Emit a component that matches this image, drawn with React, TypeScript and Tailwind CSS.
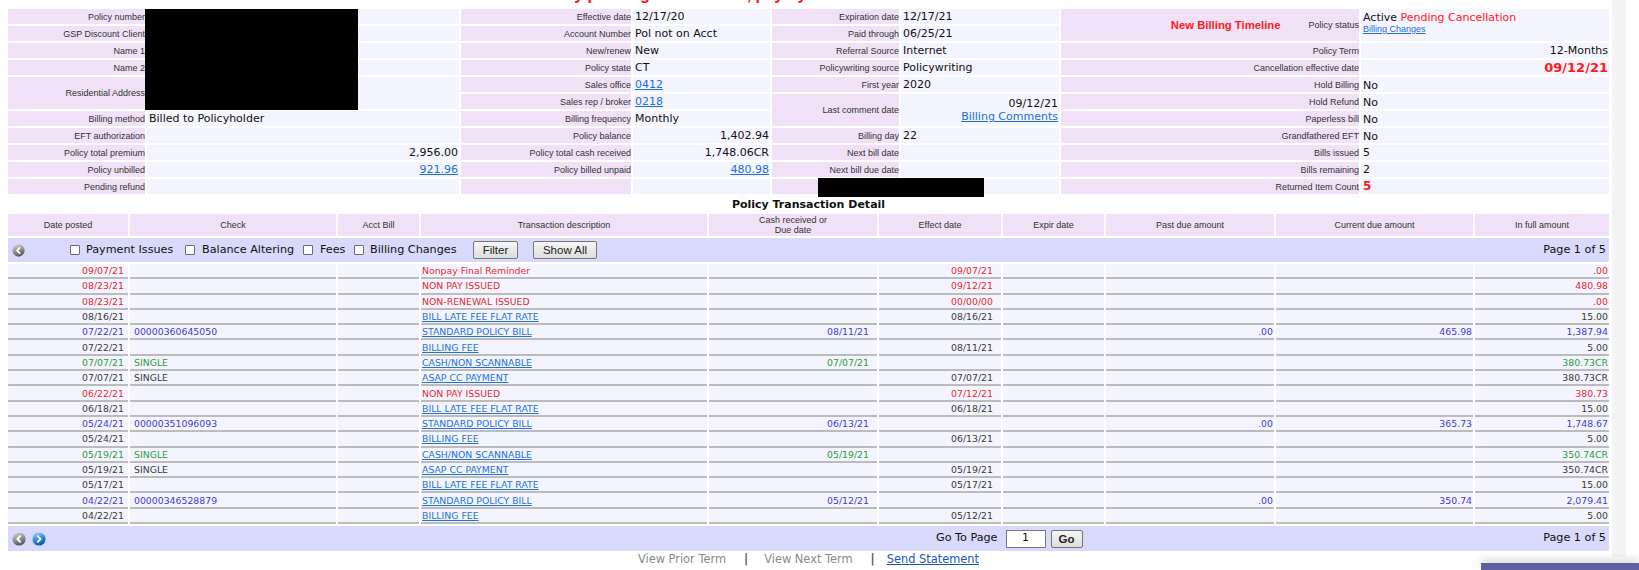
import React from 'react';

type Tone = 'red' | 'blue' | 'green' | 'gray';

const toneClass: Record<Tone, string> = {
  red: 'text-[#e22a2f]',
  blue: 'text-[#3c3cd2]',
  green: 'text-[#2e9b3c]',
  gray: 'text-[#3a3a3a]',
};

interface Txn {
  tone: Tone;
  date: string;
  check?: string;
  desc: string;
  link: boolean;
  cash?: string;
  effect?: string;
  past?: string;
  cur?: string;
  full: string;
}

const txns: Txn[] = [
  { tone: 'red', date: '09/07/21', desc: 'Nonpay Final Reminder', link: false, effect: '09/07/21', full: '.00' },
  { tone: 'red', date: '08/23/21', desc: 'NON PAY ISSUED', link: false, effect: '09/12/21', full: '480.98' },
  { tone: 'red', date: '08/23/21', desc: 'NON-RENEWAL ISSUED', link: false, effect: '00/00/00', full: '.00' },
  { tone: 'gray', date: '08/16/21', desc: 'BILL LATE FEE FLAT RATE', link: true, effect: '08/16/21', full: '15.00' },
  { tone: 'blue', date: '07/22/21', check: '00000360645050', desc: 'STANDARD POLICY BILL', link: true, cash: '08/11/21', past: '.00', cur: '465.98', full: '1,387.94' },
  { tone: 'gray', date: '07/22/21', desc: 'BILLING FEE', link: true, effect: '08/11/21', full: '5.00' },
  { tone: 'green', date: '07/07/21', check: 'SINGLE', desc: 'CASH/NON SCANNABLE', link: true, cash: '07/07/21', full: '380.73CR' },
  { tone: 'gray', date: '07/07/21', check: 'SINGLE', desc: 'ASAP CC PAYMENT', link: true, effect: '07/07/21', full: '380.73CR' },
  { tone: 'red', date: '06/22/21', desc: 'NON PAY ISSUED', link: false, effect: '07/12/21', full: '380.73' },
  { tone: 'gray', date: '06/18/21', desc: 'BILL LATE FEE FLAT RATE', link: true, effect: '06/18/21', full: '15.00' },
  { tone: 'blue', date: '05/24/21', check: '00000351096093', desc: 'STANDARD POLICY BILL', link: true, cash: '06/13/21', past: '.00', cur: '365.73', full: '1,748.67' },
  { tone: 'gray', date: '05/24/21', desc: 'BILLING FEE', link: true, effect: '06/13/21', full: '5.00' },
  { tone: 'green', date: '05/19/21', check: 'SINGLE', desc: 'CASH/NON SCANNABLE', link: true, cash: '05/19/21', full: '350.74CR' },
  { tone: 'gray', date: '05/19/21', check: 'SINGLE', desc: 'ASAP CC PAYMENT', link: true, effect: '05/19/21', full: '350.74CR' },
  { tone: 'gray', date: '05/17/21', desc: 'BILL LATE FEE FLAT RATE', link: true, effect: '05/17/21', full: '15.00' },
  { tone: 'blue', date: '04/22/21', check: '00000346528879', desc: 'STANDARD POLICY BILL', link: true, cash: '05/12/21', past: '.00', cur: '350.74', full: '2,079.41' },
  { tone: 'gray', date: '04/22/21', desc: 'BILLING FEE', link: true, effect: '05/12/21', full: '5.00' },
];

const LBL =
  "bg-[#f0e1f7] flex items-center justify-end text-right text-[9px] leading-[10px] text-[#333] [font-family:'Liberation_Sans',Arial,sans-serif] whitespace-nowrap overflow-hidden";
const VAL = 'bg-[#f4f4fe] flex items-center text-[11px] leading-[13px] text-[#111] whitespace-nowrap overflow-hidden';
const LINK = 'text-[#1d6fd4] underline';

const NavIcon = ({ dir, tone, size }: { dir: 'left' | 'right'; tone: 'gray' | 'blue'; size: number }) => {
  const id = `nav-${tone}-${dir}-${size}`;
  return (
    <svg width={size} height={size} viewBox="0 0 14 14" className="shrink-0">
      <defs>
        <linearGradient id={id} x1="0.3" y1="0" x2="0.7" y2="1">
          <stop offset="0" stopColor={tone === 'gray' ? '#cfcfcf' : '#8ccaf7'} />
          <stop offset="0.55" stopColor={tone === 'gray' ? '#8a8a8a' : '#2a84d2'} />
          <stop offset="1" stopColor={tone === 'gray' ? '#505050' : '#0a4f98'} />
        </linearGradient>
      </defs>
      <circle cx="7" cy="7" r="6.6" fill={`url(#${id})`} />
      <path
        d={dir === 'left' ? 'M8.2 4.2 L5.4 7 L8.2 9.8' : 'M5.8 4.2 L8.6 7 L5.8 9.8'}
        stroke="#ffffff"
        strokeWidth="1.9"
        fill="none"
        strokeLinecap="round"
        strokeLinejoin="round"
      />
    </svg>
  );
};

const CheckBox = ({ className = '' }: { className?: string }) => (
  <span className={`inline-block w-[10px] h-[10px] border border-[#6b6b6b] rounded-[1px] bg-white shrink-0 ${className}`} />
);

const TopTable = () => (
  <div className="grid grid-cols-[137px_312px_170px_137px_127px_158px_298px_248px] grid-rows-[repeat(11,15px)] gap-[2px]">
    {/* row 1 */}
    <div className={LBL}>Policy number</div>
    <div className={VAL} />
    <div className={LBL}>Effective date</div>
    <div className={`${VAL} pl-[2px]`}>12/17/20</div>
    <div className={LBL}>Expiration date</div>
    <div className={`${VAL} pl-[2px]`}>12/17/21</div>
    <div className={`${LBL} row-span-2`}>
      <span className="mr-[28px] text-[11.3px] font-bold text-[#ff1a1a]">New Billing Timeline</span>
      <span>Policy status</span>
    </div>
    <div className="row-span-2 bg-[#f4f4fe] flex flex-col items-start justify-start pt-[2px] pl-[2px] whitespace-nowrap">
      <div className="text-[11px] leading-[13px] text-[#111]">
        Active <span className="text-[#ff1a1a]">Pending Cancellation</span>
      </div>
      <div className={`text-[9px] leading-[10px] [font-family:'Liberation_Sans',Arial,sans-serif] ${LINK}`}>Billing Changes</div>
    </div>

    {/* row 2 */}
    <div className={LBL}>GSP Discount Client</div>
    <div className={VAL} />
    <div className={LBL}>Account Number</div>
    <div className={`${VAL} pl-[2px]`}>Pol not on Acct</div>
    <div className={LBL}>Paid through</div>
    <div className={`${VAL} pl-[2px]`}>06/25/21</div>

    {/* row 3 */}
    <div className={LBL}>Name 1</div>
    <div className={VAL} />
    <div className={LBL}>New/renew</div>
    <div className={`${VAL} pl-[2px]`}>New</div>
    <div className={LBL}>Referral Source</div>
    <div className={`${VAL} pl-[2px]`}>Internet</div>
    <div className={LBL}>Policy Term</div>
    <div className={`${VAL} justify-end pr-[1px]`}>12-Months</div>

    {/* row 4 */}
    <div className={LBL}>Name 2</div>
    <div className={VAL} />
    <div className={LBL}>Policy state</div>
    <div className={`${VAL} pl-[2px]`}>CT</div>
    <div className={LBL}>Policywriting source</div>
    <div className={`${VAL} pl-[2px]`}>Policywriting</div>
    <div className={LBL}>Cancellation effective date</div>
    <div className={`${VAL} justify-end pr-[1px]`}>
      <span className="text-[13px] font-bold text-[#ff1a1a]">09/12/21</span>
    </div>

    {/* row 5 */}
    <div className={`${LBL} row-span-2`}>Residential Address</div>
    <div className={`${VAL} row-span-2`} />
    <div className={LBL}>Sales office</div>
    <div className={`${VAL} pl-[2px]`}>
      <span className={LINK}>0412</span>
    </div>
    <div className={LBL}>First year</div>
    <div className={`${VAL} pl-[2px]`}>2020</div>
    <div className={LBL}>Hold Billing</div>
    <div className={`${VAL} pl-[2px] pt-[2px]`}>No</div>

    {/* row 6 */}
    <div className={LBL}>Sales rep / broker</div>
    <div className={`${VAL} pl-[2px]`}>
      <span className={LINK}>0218</span>
    </div>
    <div className={`${LBL} row-span-2`}>Last comment date</div>
    <div className="row-span-2 bg-[#f4f4fe] flex flex-col items-end justify-center pr-[1px] text-[11px] leading-[13px] text-[#111] whitespace-nowrap">
      <div>09/12/21</div>
      <div className={LINK}>Billing Comments</div>
    </div>
    <div className={LBL}>Hold Refund</div>
    <div className={`${VAL} pl-[2px] pt-[2px]`}>No</div>

    {/* row 7 */}
    <div className={LBL}>Billing method</div>
    <div className={`${VAL} pl-[2px]`}>Billed to Policyholder</div>
    <div className={LBL}>Billing frequency</div>
    <div className={`${VAL} pl-[2px]`}>Monthly</div>
    <div className={LBL}>Paperless bill</div>
    <div className={`${VAL} pl-[2px] pt-[2px]`}>No</div>

    {/* row 8 */}
    <div className={LBL}>EFT authorization</div>
    <div className={VAL} />
    <div className={LBL}>Policy balance</div>
    <div className={`${VAL} justify-end pr-[1px]`}>1,402.94</div>
    <div className={LBL}>Billing day</div>
    <div className={`${VAL} pl-[2px]`}>22</div>
    <div className={LBL}>Grandfathered EFT</div>
    <div className={`${VAL} pl-[2px] pt-[2px]`}>No</div>

    {/* row 9 */}
    <div className={LBL}>Policy total premium</div>
    <div className={`${VAL} justify-end pr-[1px]`}>2,956.00</div>
    <div className={LBL}>Policy total cash received</div>
    <div className={`${VAL} justify-end pr-[1px]`}>1,748.06CR</div>
    <div className={LBL}>Next bill date</div>
    <div className={VAL} />
    <div className={LBL}>Bills issued</div>
    <div className={`${VAL} pl-[2px]`}>5</div>

    {/* row 10 */}
    <div className={LBL}>Policy unbilled</div>
    <div className={`${VAL} justify-end pr-[1px]`}>
      <span className={LINK}>921.96</span>
    </div>
    <div className={LBL}>Policy billed unpaid</div>
    <div className={`${VAL} justify-end pr-[1px]`}>
      <span className={LINK}>480.98</span>
    </div>
    <div className={LBL}>Next bill due date</div>
    <div className={VAL} />
    <div className={LBL}>Bills remaining</div>
    <div className={`${VAL} pl-[2px]`}>2</div>

    {/* row 11 */}
    <div className={LBL}>Pending refund</div>
    <div className={VAL} />
    <div className={LBL} />
    <div className={VAL} />
    <div className={LBL} />
    <div className={VAL} />
    <div className={LBL}>Returned Item Count</div>
    <div className={`${VAL} pl-[2px]`}>
      <span className="text-[12px] font-bold text-[#ff1a1a]">5</span>
    </div>
  </div>
);

const COLS = 'grid grid-cols-[120px_206px_81px_286px_168px_122px_101px_168px_197px_134px] gap-x-[2px]';
const HDR =
  "bg-[#f0e1f7] flex items-center justify-center text-center text-[9px] leading-[10px] text-[#333] [font-family:'Liberation_Sans',Arial,sans-serif]";
const CELL =
  'h-[15.3px] bg-[#f4f4fe] border-b-2 border-[#bcbcbc] flex items-center text-[9.33px] leading-[11px] whitespace-nowrap overflow-hidden';
const BTN =
  "h-[18px] border border-[#767676] rounded-[2px] bg-gradient-to-b from-[#f6f6f6] to-[#dddddd] text-[11.5px] leading-[14px] text-[#222] [font-family:'Liberation_Sans',Arial,sans-serif] shrink-0";

const TxnTable = () => (
  <div>
    <div className={`${COLS} h-[22px]`}>
      <div className={HDR}>Date posted</div>
      <div className={HDR}>Check</div>
      <div className={HDR}>Acct Bill</div>
      <div className={HDR}>Transaction description</div>
      <div className={HDR}>
        Cash received or
        <br />
        Due date
      </div>
      <div className={HDR}>Effect date</div>
      <div className={HDR}>Expir date</div>
      <div className={HDR}>Past due amount</div>
      <div className={HDR}>Current due amount</div>
      <div className={HDR}>In full amount</div>
    </div>

    {/* filter row */}
    <div className="mt-[2px] h-[24px] bg-[#d9d9fb] flex items-center pl-[4px] pr-[3px] text-[11.2px] text-[#111] whitespace-nowrap">
      <NavIcon dir="left" tone="gray" size={13} />
      <CheckBox className="ml-[45px]" />
      <span className="ml-[6px] w-[91px] shrink-0">Payment Issues</span>
      <CheckBox className="ml-[8px]" />
      <span className="ml-[7px] w-[92px] shrink-0">Balance Altering</span>
      <CheckBox className="ml-[9px]" />
      <span className="ml-[7px] w-[25px] shrink-0">Fees</span>
      <CheckBox className="ml-[9px]" />
      <span className="ml-[6px] w-[87px] shrink-0">Billing Changes</span>
      <button className={`${BTN} ml-[16px] w-[45px]`}>Filter</button>
      <button className={`${BTN} ml-[15px] w-[64px]`}>Show All</button>
      <span className="ml-auto">Page 1 of 5</span>
    </div>

    {/* data rows */}
    <div className={`${COLS} mt-[2px]`}>
      {txns.map((t, i) => {
        const tc = toneClass[t.tone];
        return (
          <React.Fragment key={i}>
            <div className={`${CELL} ${tc} justify-end pr-[4px]`}>{t.date}</div>
            <div className={`${CELL} ${tc} justify-start pl-[4px]`}>{t.check ?? ''}</div>
            <div className={CELL} />
            <div className={`${CELL} justify-start pl-[1px]`}>
              <span className={t.link ? 'text-[#2273d6] underline' : tc}>{t.desc}</span>
            </div>
            <div className={`${CELL} ${tc} justify-end pr-[8px]`}>{t.cash ?? ''}</div>
            <div className={`${CELL} ${tc} justify-end pr-[8px]`}>{t.effect ?? ''}</div>
            <div className={CELL} />
            <div className={`${CELL} ${tc} justify-end pr-[1px]`}>{t.past ?? ''}</div>
            <div className={`${CELL} ${tc} justify-end pr-[1px]`}>{t.cur ?? ''}</div>
            <div className={`${CELL} ${tc} justify-end pr-[1px]`}>{t.full}</div>
          </React.Fragment>
        );
      })}
    </div>

    {/* footer row */}
    <div className="mt-[2px] h-[25px] bg-[#d9d9fb] flex items-center pl-[4px] pr-[3px] text-[#111] whitespace-nowrap">
      <NavIcon dir="left" tone="gray" size={14} />
      <span className="ml-[6px] flex">
        <NavIcon dir="right" tone="blue" size={14} />
      </span>
      <span className="ml-[890px] text-[11.2px]">Go To Page</span>
      <div className="ml-[8px] w-[40px] h-[18px] bg-white border border-[#7a7a7a] flex items-center justify-center text-[11px] shrink-0">
        1
      </div>
      <button className={`${BTN} ml-[5px] w-[32px] h-[17px] text-[10px] font-bold`}>Go</button>
      <span className="ml-auto text-[11.2px]">Page 1 of 5</span>
    </div>

    {/* bottom links */}
    <div className="h-[18px] flex items-center justify-center text-[11.4px] whitespace-nowrap">
      <span className="text-[#8a8a8a]">View Prior Term</span>
      <span className="ml-[18px] mr-[16px] text-[#555] font-bold">|</span>
      <span className="text-[#8a8a8a]">View Next Term</span>
      <span className="ml-[18px] mr-[12px] text-[#555] font-bold">|</span>
      <span className="text-[#1a55c8] underline">Send Statement</span>
    </div>
  </div>
);

export default function App() {
  return (
    <div className="relative w-[1639px] h-[570px] overflow-hidden bg-white flex [font-family:'DejaVu_Sans',Verdana,sans-serif]">
      <div className="w-[1609px] shrink-0 pl-[8px]">
        {/* red notice scrolled mostly above the view; only its descenders show */}
        <div className="h-[9px] overflow-hidden">
          <div className="-mt-[13px] pl-[528px] text-[16px] leading-[16px] font-bold text-[#ff1010] whitespace-nowrap [font-family:'Liberation_Sans',Arial,sans-serif]">
            Policy pending cancellation, pay by 09/12/21
          </div>
        </div>

        <TopTable />

        <div className="h-[20px] pt-[2px] flex items-center justify-center text-[11px] font-bold text-[#111]">
          Policy Transaction Detail
        </div>

        <TxnTable />
      </div>

      <div className="ml-[3px] w-[14px] h-[557px] bg-[#f4f4f7] shrink-0" />

      {/* redaction boxes */}
      <div className="absolute left-[145px] top-[9px] w-[213px] h-[101px] bg-black" />
      <div className="absolute left-[818px] top-[178px] w-[166px] h-[19px] bg-black" />

      {/* floating bar at bottom right */}
      <div className="absolute left-[1481px] top-[563px] w-[158px] h-[7px] bg-[#5f609f] shadow-[0_-3px_8px_rgba(0,0,0,0.18)]" />
    </div>
  );
}
